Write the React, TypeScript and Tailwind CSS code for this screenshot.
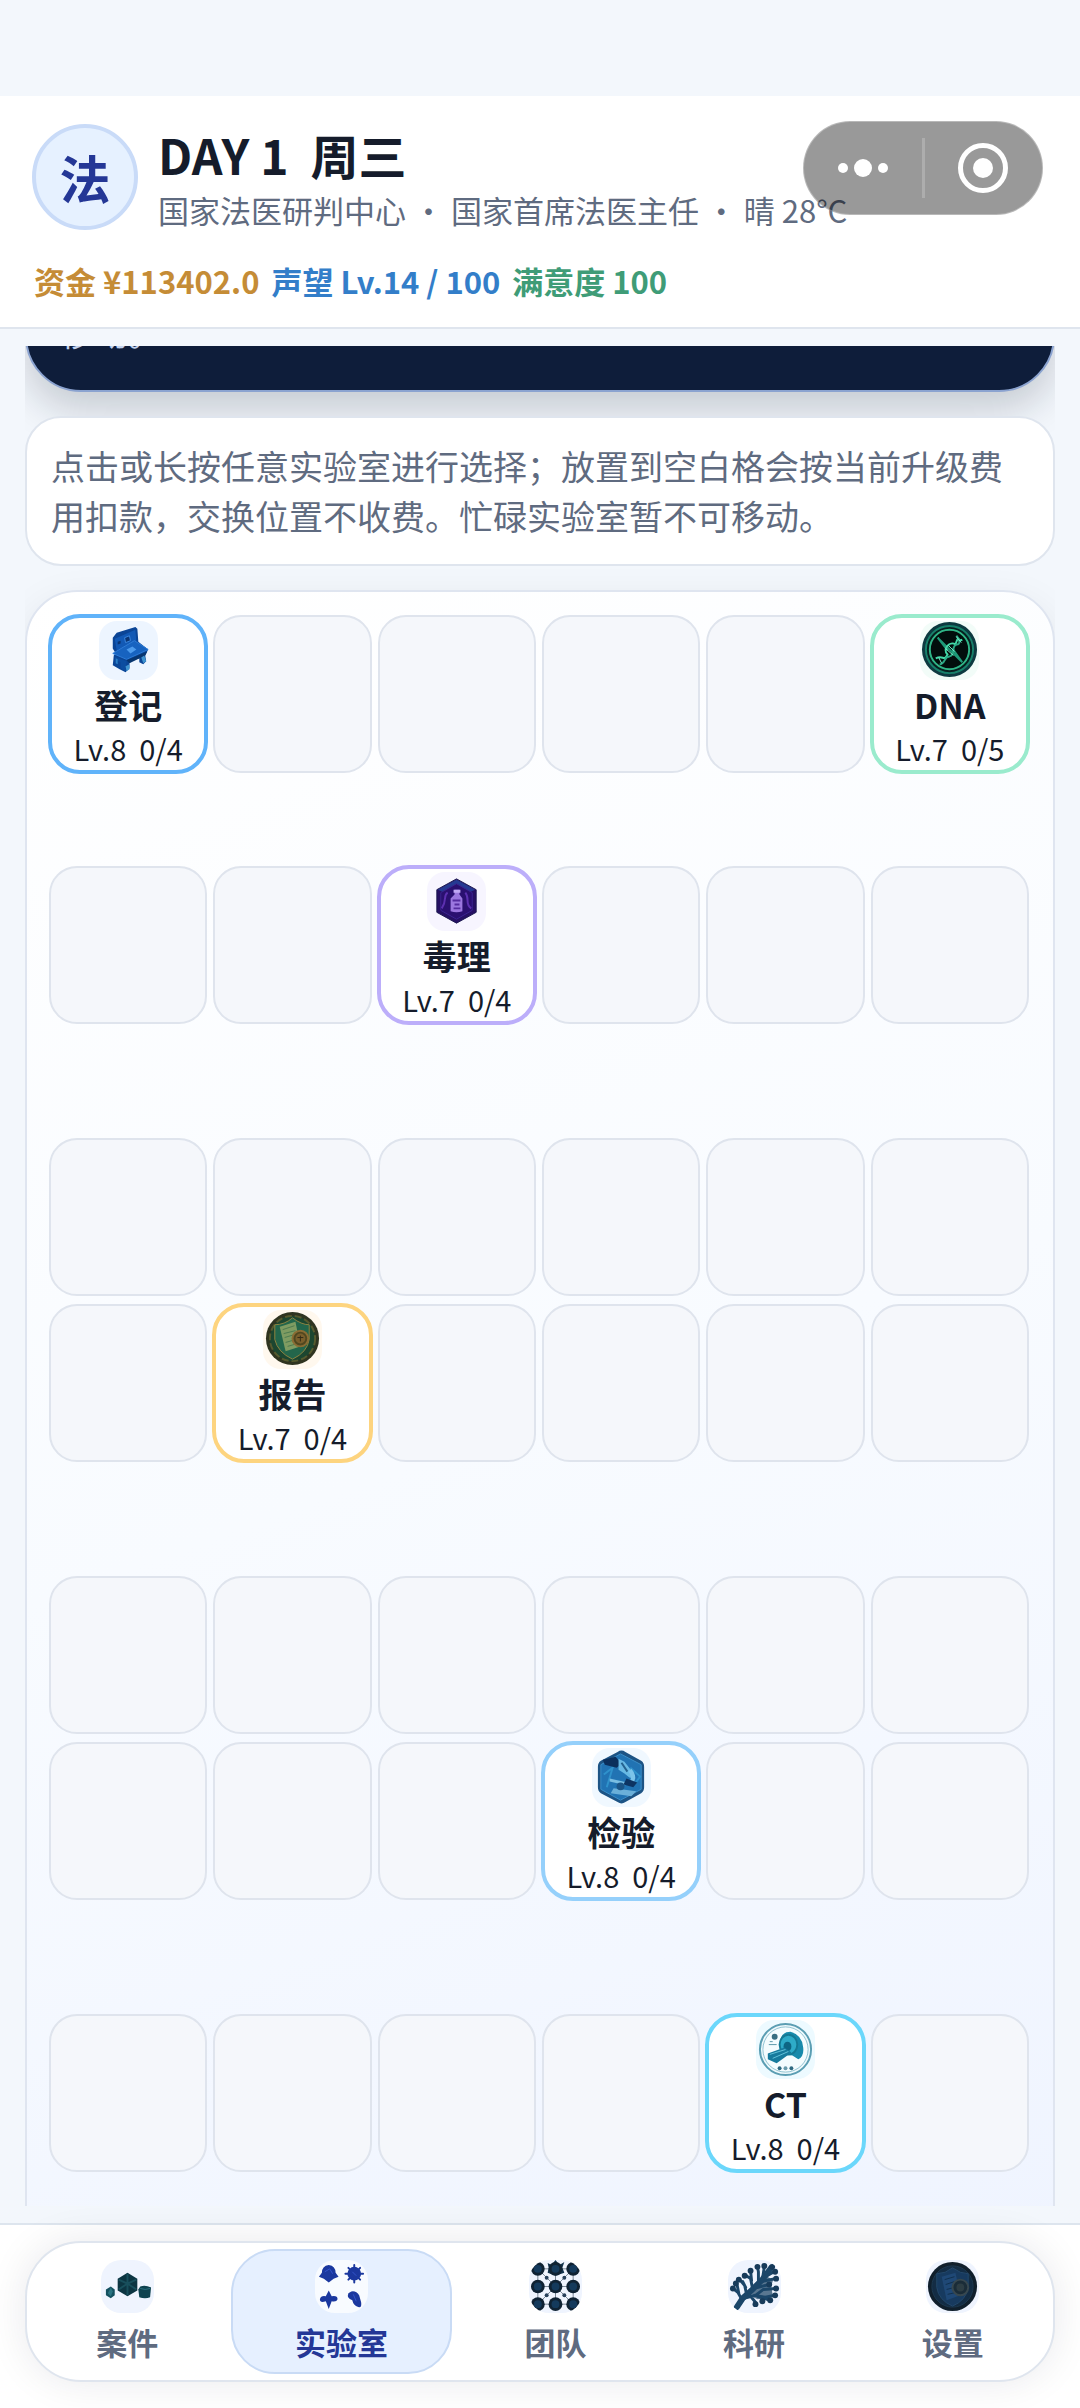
import React, { useState } from "react";

type LabId = "register" | "dna" | "tox" | "report" | "exam" | "ct";

type Lab = {
  id: LabId;
  name: string;
  level: number;
  busy: number;
  slots: number;
  row: number;
  col: number;
  border: string;
  tint: string;
};

const labs: Lab[] = [
  { id: "register", name: "登记", level: 8, busy: 0, slots: 4, row: 0, col: 0, border: "border-[#60b3fa]", tint: "bg-[#edf5ff]" },
  { id: "dna", name: "DNA", level: 7, busy: 0, slots: 5, row: 0, col: 5, border: "border-[#9aebcd]", tint: "bg-[#f2fcf8]" },
  { id: "tox", name: "毒理", level: 7, busy: 0, slots: 4, row: 1, col: 2, border: "border-[#bcaefa]", tint: "bg-[#f7f5ff]" },
  { id: "report", name: "报告", level: 7, busy: 0, slots: 4, row: 3, col: 1, border: "border-[#fdd47f]", tint: "bg-[#fff8ee]" },
  { id: "exam", name: "检验", level: 8, busy: 0, slots: 4, row: 5, col: 3, border: "border-[#95d0fb]", tint: "bg-[#f0f8ff]" },
  { id: "ct", name: "CT", level: 8, busy: 0, slots: 4, row: 6, col: 4, border: "border-[#6bd7fb]", tint: "bg-[#edfaff]" },
];

const rowSpacing = ["", "mt-[93px]", "mt-[114px]", "mt-2", "mt-[114px]", "mt-2", "mt-[114px]"];

const LabIcon: React.FC<{ id: LabId }> = ({ id }) => {
  switch (id) {
    case "register":
      return (
        <svg viewBox="0 0 60 60" className="size-full" aria-hidden="true">
          <path d="M14 17 L18 12 L37 6 L39 8 L40 21 L50 29 L47 35 L48 41 L45 44 L41 42 L41 38 L31 41 L31 48 L27 52 L21 49 L14 45 L15 35 L17 33 L14 28 Z" fill="#0b4596" />
          <path d="M16 18 L37 9 L38 22 L18 30 Z" fill="#1259b5" />
          <path d="M26 17 L31 15 L32 20 L27 22 Z" fill="#0a3575" stroke="#3a86dd" />
          <path d="M19 21 l3 -1 v3 l-3 1 z" fill="#0a3575" />
          <path d="M14 33 L36 20 L50 29 L28 39 Z" fill="#1763c0" stroke="#2d7bd6" />
          <path d="M28 29 L34 26 L38 29 L32 33 Z" fill="#4d9bec" />
          <path d="M16 36 L28 41 L27 51 L22 48 L22 42 L17 40 Z" fill="#0c4da0" />
          <path d="M28 40 L49 31 L47 35 L31 43 Z" fill="#07356f" />
          <path d="M27 46 l4 -2 v5 l-3 2 z M43 37 l3 -2 2 6 -3 2 z" fill="#3f93cf" />
          <path d="M17 38 l2 1 v5 l-2 -1 z" fill="#2a7fc8" />
        </svg>
      );
    case "dna":
      return (
        <svg viewBox="0 0 60 60" className="size-full" aria-hidden="true">
          <circle cx="30" cy="29" r="28" fill="#0d3a40" />
          <circle cx="30" cy="29" r="24" fill="#06201f" stroke="#17806a" strokeWidth="2" />
          <circle cx="30" cy="29" r="20" fill="#020e0c" stroke="#2fb586" strokeWidth="2" />
          <path d="M18 17 L43 42 M18 17 L28 30 M43 42 L33 28" stroke="#1e9a78" strokeWidth="2" />
          <path d="M16 38 C24 34 24 42 28 34 C22 28 31 20 36 24 C40 12 38 22 43 19" fill="none" stroke="#43d9a7" strokeWidth="2" />
          <path d="M20 44 C26 44 24 36 30 36 C37 34 31 26 37 24 C42 24 40 18 37 15" fill="none" stroke="#2ba884" strokeWidth="2" />
          <path d="M26 28 l8 7 M29 25 l6 6 M19 37 l3 6 M37 16 l5 6" stroke="#7af0ca" />
        </svg>
      );
    case "tox":
      return (
        <svg viewBox="0 0 60 60" className="size-full" aria-hidden="true">
          <path d="M30 7 L50 18 V41 L30 52 L10 41 V18 Z" fill="#261064" stroke="#1c1850" />
          <path d="M30 8 L49 18 L40 22 L30 17 L20 22 L11 18 Z" fill="#253a92" />
          <path d="M30 12 L46 21 V39 L30 48 L14 39 V21 Z" fill="#2a1070" stroke="#3a2490" />
          <path d="M15 37 C21 28 16 24 21 21 M45 37 C38 33 44 27 39 21" stroke="#5c30b0" strokeWidth="2" fill="none" />
          <path d="M28 18 h5 v5 l3 4 v13 q-6 2 -12 0 V27 l4 -4 Z" fill="#9b77df" />
          <path d="M27 18 h7 v3 h-7 Z" fill="#c0a8f4" />
          <path d="M26 29 h8 M28 33 h5 M27 37 h7" stroke="#552c9f" strokeWidth="2" />
        </svg>
      );
    case "report":
      return (
        <svg viewBox="0 0 60 60" className="size-full" aria-hidden="true">
          <circle cx="30" cy="29" r="27" fill="#2f3420" />
          <circle cx="30" cy="29" r="23" fill="#1c4630" stroke="#565a2e" strokeWidth="2" strokeDasharray="7 3" />
          <path d="M12 15 Q22 15 30 8 Q39 15 47 15 V30 Q45 43 30 50 Q15 43 12 30 Z" fill="#23664b" stroke="#8f8440" />
          <path d="M17 17 L33 12 L38 37 L23 42 Z" fill="#7f9c62" />
          <path d="M20 20 l12 -4 M21 24 l12 -3 M22 28 l10 -3 M23 33 l7 -2 M25 37 l7 -2" stroke="#4d7a50" />
          <circle cx="38" cy="29" r="8" fill="#504820" stroke="#8a6c33" strokeWidth="2" />
          <circle cx="38" cy="29" r="5" fill="#7a5f2c" />
          <path d="M35 28 h6 M38 26 v6" stroke="#342d17" />
        </svg>
      );
    case "exam":
      return (
        <svg viewBox="0 0 60 60" className="size-full" aria-hidden="true">
          <path d="M26 4 Q30 1 34 4 L50 13 Q53 15 53 19 V40 Q53 44 50 46 L34 55 Q30 58 26 55 L9 46 Q6 44 6 40 V19 Q6 15 9 13 Z" fill="#1d5485" />
          <path d="M29 6 L50 17 V42 L29 53 L9 42 V17 Z" fill="#2173b3" stroke="#3b8fc9" />
          <path d="M12 27 L21 20 L15 40 M39 20 L49 29 L43 37" stroke="#2f91cb" strokeWidth="2" fill="none" />
          <path d="M11 12 L24 9 L30 16 L25 20 L13 17 Z" fill="#0b2f5c" />
          <path d="M27 11 L33 14 L40 23 L43 31 L38 30 L33 26 L27 22 Z" fill="#68b9e4" />
          <path d="M40 21 Q48 30 40 39 L37 36 Q42 30 37 24 Z" fill="#7cc4ea" />
          <path d="M30 15 l6 9" stroke="#24628f" strokeWidth="2" />
          <path d="M18 31 L36 35 L34 38 L18 34 Z" fill="#79bde2" />
          <path d="M35 31 l11 4 -4 5 -10 -3 Z" fill="#0d3463" />
          <path d="M22 41 L45 44 L40 49 L19 46 Z" fill="#6bb0d9" />
          <circle cx="29" cy="39" r="4" fill="#1b5587" />
        </svg>
      );
    case "ct":
      return (
        <svg viewBox="0 0 60 60" className="size-full" aria-hidden="true">
          <circle cx="30" cy="30" r="26" fill="#eef9fc" stroke="#5b9eb3" strokeWidth="2" />
          <circle cx="30" cy="30" r="23" fill="#f4fcfe" stroke="#91c3d1" />
          <path d="M24 23 Q25 12 35 12 Q47 15 48 28 Q49 37 43 40 L37 36 Q25 36 24 27 Z" fill="#188aab" />
          <ellipse cx="33" cy="25" rx="9" ry="10" fill="#2eabc8" stroke="#147994" strokeWidth="2" />
          <ellipse cx="32" cy="27" rx="4" ry="5" fill="#0e6684" />
          <path d="M12 34 L29 28 L36 33 L21 44 L12 40 Z" fill="#167a9c" />
          <path d="M14 35 L30 30 M17 39 L33 32" stroke="#63c2d9" />
          <circle cx="19" cy="17" r="3" fill="#396f82" />
          <path d="M13 25 h8 M14 22 h3" stroke="#5c98aa" />
          <circle cx="24" cy="49" r="2" fill="#306b82" />
          <circle cx="30" cy="49" r="2" fill="#6b9bab" />
          <circle cx="36" cy="49" r="2" fill="#306b82" />
        </svg>
      );
  }
};

const LabTile: React.FC<{ lab: Lab }> = ({ lab }) => (
  <button
    type="button"
    className={`-m-px flex flex-col items-center gap-[3px] rounded-[32px] border-4 bg-white pt-[3px] text-[#151c2b] ${lab.border}`}
  >
    <span className={`size-[59px] shrink-0 overflow-hidden rounded-[18px] ${lab.tint}`}>
      <LabIcon id={lab.id} />
    </span>
    <span className="text-[34px] leading-[44px] font-bold">{lab.name}</span>
    <span className="text-[29px] leading-9 whitespace-pre">
      {`Lv.${lab.level}  ${lab.busy}/${lab.slots}`}
    </span>
  </button>
);

const tabs = [
  { id: "cases", label: "案件" },
  { id: "labs", label: "实验室" },
  { id: "team", label: "团队" },
  { id: "research", label: "科研" },
  { id: "settings", label: "设置" },
];

const TabIcon: React.FC<{ id: string }> = ({ id }) => {
  if (id === "cases") {
    return (
      <svg viewBox="0 0 54 54" className="size-full" aria-hidden="true">
        <path d="M27 13 L37 19 V31 L27 37 L17 31 V19 Z" fill="#0c3542" />
        <path d="M18 20 L27 24 L36 20 M27 24 V36 M18 30 L27 24 L36 30 M27 14 V24" stroke="#184f5c" strokeWidth="2" fill="none" />
        <path d="M10 27 L14 30 V36 L10 39 L5 36 V30 Z" fill="#145160" />
        <path d="M10 28 l2 4 -2 5 -3 -3 Z" fill="#2a7482" />
        <path d="M40 27 Q45 25 51 28 L50 38 Q45 40 39 38 L38 30 Z" fill="#0f4350" />
        <path d="M40 29 Q45 31 50 29" stroke="#2a7080" fill="none" />
      </svg>
    );
  }
  if (id === "labs") {
    return (
      <svg viewBox="0 0 54 54" className="size-full" fill="#1b389f" aria-hidden="true">
        <path d="M14 5 Q21 6 21 13 L24 17 L19 19 L14 23 L9 19 L4 17 L7 13 Q7 6 14 5 Z" />
        <circle cx="40" cy="14" r="7" />
        <path d="M40 5 V23 M31 14 H49 M34 8 L46 20 M46 8 L34 20" stroke="#1b389f" strokeWidth="2" strokeLinecap="round" />
        <path d="M14 31 L17 37 Q23 36 23 40 Q22 43 17 42 L14 50 L11 42 Q5 44 5 40 Q6 36 11 37 Z" />
        <path d="M37 32 Q42 31 45 36 L47 43 Q48 49 44 48 Q39 46 38 41 Q32 39 34 34 Z" />
        <path d="M10 12 l5 -3 3 5 M38 12 l4 4 M39 35 l3 7" stroke="#3455cb" fill="none" />
      </svg>
    );
  }
  if (id === "team") {
    return (
      <svg viewBox="0 0 54 54" className="size-full" aria-hidden="true">
        <path d="M9 9 H45 M9 27 H45 M9 45 H45 M9 9 V45 M27 9 V45 M45 9 V45 M12 12 L42 42 M42 12 L12 42" stroke="#7a8896" />
        <path d="M19 3 L23 5 L27 0 L31 5 L36 2 L34 8 L36 13 L27 16 L19 13 L20 8 Z" fill="#11324c" />
        {[9, 27, 45].map((y) =>
          [9, 27, 45].map((x) => (
            <g key={`${x}-${y}`}>
              <circle cx={x} cy={y} r="7" fill="#0f2233" />
              <circle cx={x} cy={y} r="4" fill="#143a5c" />
            </g>
          ))
        )}
        {[18, 36].map((y) =>
          [18, 36].map((x) => <circle key={`${x}-${y}`} cx={x} cy={y} r="2" fill="#27405a" />)
        )}
      </svg>
    );
  }
  if (id === "research") {
    return (
      <svg viewBox="0 0 54 54" className="size-full" aria-hidden="true">
        <path d="M24 30 L38 16 L46 20 L44 27 L46 38 L30 40 L22 36 Z" fill="#1a4263" opacity="0.7" />
        <g fill="none" stroke="#1b4669" strokeWidth="3" strokeLinecap="round">
          <path d="M9 48 L15 39 L25 30 L35 20 L44 8" strokeWidth="6" />
          <path d="M14 40 L10 33 L5 29 M11 34 L9 24 M19 35 L17 26 L12 20 M18 28 L15 22 M25 29 L23 19 L17 15 M24 21 L23 11 M31 24 L31 12 L30 7 M35 20 L37 7 M38 17 L47 12 M34 22 L48 19 M16 39 L28 36 L36 30 L49 29 M27 36 L38 38 L47 36 M23 37 L28 43 M30 37 L43 41 M30 28 L42 25" />
        </g>
        <g fill="#173b5a">
          {[[30, 7], [37, 6], [45, 7], [48, 12], [23, 11], [17, 16], [11, 20], [8, 24], [5, 29], [49, 19], [49, 29], [48, 36], [43, 41], [35, 42], [28, 45], [42, 25]].map(([x, y]) => (
            <circle key={`${x}-${y}`} cx={x} cy={y} r="3" />
          ))}
        </g>
      </svg>
    );
  }
  return (
    <svg viewBox="0 0 54 54" className="size-full" aria-hidden="true">
      <circle cx="27" cy="27" r="25" fill="#101f2c" />
      <circle cx="27" cy="27" r="21" fill="#132c44" stroke="#1e3950" />
      <path d="M11 14 Q20 14 27 8 Q35 14 43 14 V28 Q41 41 27 47 Q13 41 11 28 Z" fill="#173a5f" stroke="#24486b" />
      <path d="M16 17 L30 13 L35 36 L21 41 Z" fill="#1f4876" />
      <path d="M19 20 l10 -3 M20 25 l9 -3 M21 30 l8 -2 M22 35 l9 -2" stroke="#11304e" />
      <circle cx="35" cy="28" r="8" fill="#1a2c38" stroke="#37474f" strokeWidth="2" />
      <circle cx="35" cy="28" r="4" fill="#2d3d44" />
    </svg>
  );
};

const Header: React.FC = () => (
  <header className="relative border-b-2 border-[#dfe5ee] bg-white px-8 pt-7 pb-6">
    <div className="flex items-start gap-5">
      <div className="flex size-[106px] shrink-0 items-center justify-center rounded-full border-4 border-[#c9dbf8] bg-[#e6f1ff] text-[51px] font-bold text-[#243796]">
        法
      </div>
      <div className="flex flex-col gap-1">
        <h1 className="text-[48px] leading-[60px] font-bold whitespace-pre text-[#151c2b]">
          {"DAY 1  周三"}
        </h1>
        <p className="text-[31px] leading-[44px] whitespace-nowrap text-[#5f6b80]">
          国家法医研判中心 ・ 国家首席法医主任 ・ 晴 28°C
        </p>
      </div>
    </div>
    <div className="mt-[27px] flex gap-3 px-[2px] text-[31px] leading-[44px] font-bold">
      <span className="text-[#c58c36]">资金 ¥113402.0</span>
      <span className="text-[#337ec9]">声望 Lv.14 / 100</span>
      <span className="text-[#3f9c77]">满意度 100</span>
    </div>

    {/* host app capsule, floats over the header */}
    <div className="absolute top-[25px] right-[37px] flex h-[94px] w-[240px] items-center rounded-full border border-white/30 bg-black/40">
      <button type="button" aria-label="更多" className="flex h-full flex-1 items-center justify-center gap-[6px]">
        <span className="size-[10px] rounded-full bg-white" />
        <span className="size-[18px] rounded-full bg-white" />
        <span className="size-[10px] rounded-full bg-white" />
      </button>
      <span className="h-[60px] w-[3px] bg-white/20" />
      <button type="button" aria-label="关闭" className="flex h-full flex-1 items-center justify-center">
        <span className="flex size-[50px] items-center justify-center rounded-full border-[5px] border-white">
          <span className="size-5 rounded-full bg-white" />
        </span>
      </button>
    </div>
  </header>
);

const Board: React.FC = () => (
  <section className="mt-6 rounded-t-[52px] border-2 border-[#dfe5f0] bg-linear-160 from-white via-[#f8fbff] to-[#eff4ff] pt-[23px] pr-6 pb-20 pl-[22px] shadow-[0_12px_40px_rgba(15,23,42,0.08)]">
    {rowSpacing.map((spacing, row) => (
      <div key={row} className={`grid auto-rows-[158px] grid-cols-6 gap-[6px] ${spacing}`}>
        {[0, 1, 2, 3, 4, 5].map((col) => {
          const lab = labs.find((l) => l.row === row && l.col === col);
          return lab ? (
            <LabTile key={col} lab={lab} />
          ) : (
            <button
              key={col}
              type="button"
              aria-label={`空白格 ${row + 1}-${col + 1}`}
              className="rounded-[28px] border-2 border-[#dfe4ed] bg-[#f5f7fb]"
            />
          );
        })}
      </div>
    ))}
  </section>
);

const App: React.FC = () => {
  const [activeTab, setActiveTab] = useState("labs");

  return (
    <div className="flex h-screen flex-col bg-[#f3f7fc] pt-24 font-['Noto_Sans_CJK_SC',sans-serif]">
      <Header />

      <main className="mx-[25px] my-[17px] min-h-0 flex-1 overflow-hidden">
        <section className="-mt-[50px] rounded-b-[56px] border-2 border-[#8ba3d0] bg-[#0e1d3a] px-[33px] pt-[9px] pb-[33px] text-[34px] leading-[50px] text-[#c3d3ee] shadow-[0_18px_40px_rgba(15,23,42,0.2)]">
          <p>移动。</p>
        </section>

        <p className="relative mt-6 rounded-[36px] border-2 border-[#dfe5ee] bg-white px-6 py-[23px] text-[34px] leading-[50px] text-[#5f6b80]">
          点击或长按任意实验室进行选择；放置到空白格会按当前升级费用扣款，交换位置不收费。忙碌实验室暂不可移动。
        </p>

        <Board />
      </main>

      <footer className="border-t-2 border-[#dde5ee] bg-white px-[25px] pt-4 pb-[26px]">
        <nav className="flex gap-2 rounded-[56px] border-2 border-[#dfe5ee] bg-white px-[5px] py-[6px] shadow-[0_0_40px_rgba(15,23,42,0.09)]">
          {tabs.map((tab) => {
            const active = tab.id === activeTab;
            return (
              <button
                key={tab.id}
                type="button"
                onClick={() => setActiveTab(tab.id)}
                aria-current={active ? "page" : undefined}
                className={`flex flex-auto flex-col items-center gap-[7px] rounded-[44px] border-2 pt-[9px] pb-2 ${
                  active
                    ? "border-[#c9dbf5] bg-[#e6f0ff] text-[#243796]"
                    : "border-transparent text-[#5f6b80]"
                }`}
              >
                <span
                  className={`size-[53px] overflow-hidden rounded-[20px] ${
                    active ? "bg-[#f8fbff]" : "bg-[#eff4fe]"
                  }`}
                >
                  <TabIcon id={tab.id} />
                </span>
                <span className="text-[31px] leading-[44px] font-bold">{tab.label}</span>
              </button>
            );
          })}
        </nav>
      </footer>
    </div>
  );
};

export default App;
